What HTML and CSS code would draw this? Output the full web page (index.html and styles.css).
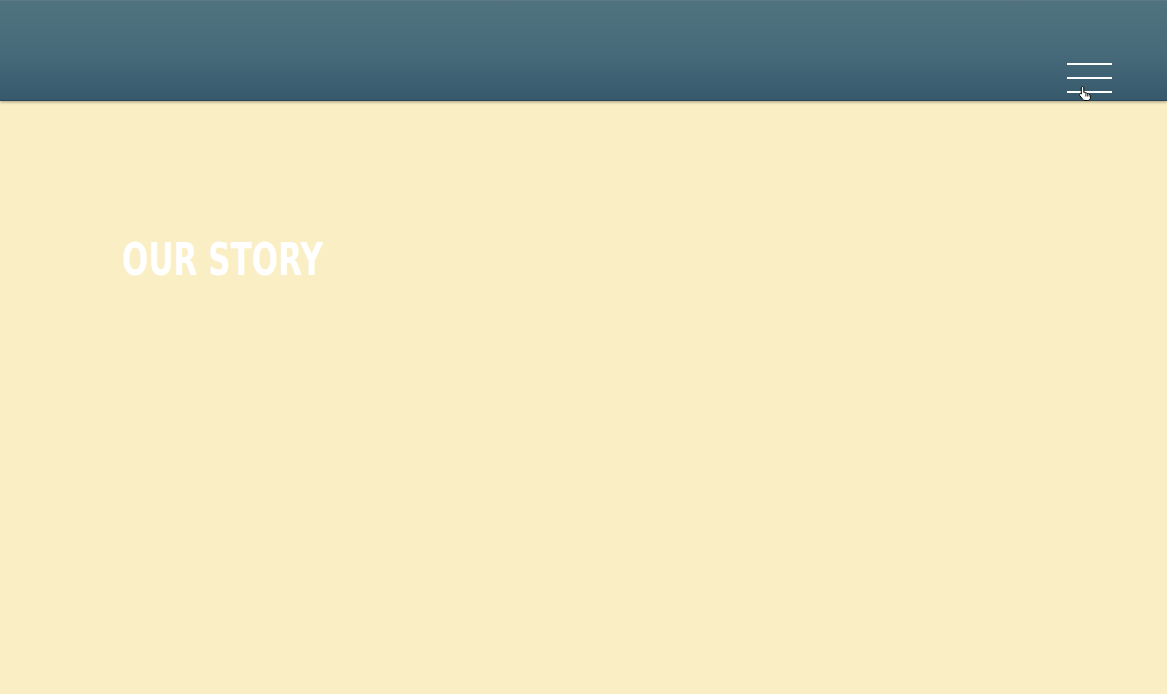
FILE: index.html
```html
<!DOCTYPE html>
<html>
<head>
<meta charset="utf-8">
<link rel="stylesheet" href="styles.css">
</head>
<body>
<header class="topbar">
  <button class="menu" aria-label="Menu">
    <span class="bar"></span>
    <span class="bar"></span>
    <span class="bar"></span>
    <svg class="cursor" width="14" height="17" viewBox="0 0 14 17">
      <path d="M4.5 1.5 C5.3 1.5 5.8 2 5.8 2.8 V7.5 L6.3 7.3 C7 7.1 7.6 7.4 7.8 8 C8.5 7.7 9.2 8 9.4 8.6 C10.1 8.4 10.8 8.8 11 9.4 C11.7 9.3 12.4 9.8 12.4 10.6 V12.8 C12.4 14.3 11.3 15.5 9.8 15.5 H7 C6 15.5 5.2 15 4.6 14.2 L1.6 10.4 C1.2 9.9 1.3 9.1 1.8 8.8 C2.3 8.4 3 8.5 3.3 9 V2.8 C3.3 2 3.8 1.5 4.5 1.5 Z" fill="#fff" stroke="#000" stroke-width="1"/>
      <path d="M7.8 8.2 V11.5 M9.4 8.8 V11.5 M11 9.6 V11.5" stroke="#000" stroke-width="0.8" fill="none"/>
    </svg>
  </button>
</header>
<main class="content">
  <h1 class="title">OUR STORY</h1>
</main>
</body>
</html>
```
FILE: styles.css
```css
html, body {
  margin: 0;
  padding: 0;
  height: 100%;
}
body {
  background: #faeec5;
  font-family: "DejaVu Sans", "Liberation Sans", sans-serif;
  overflow: hidden;
}
.topbar {
  box-sizing: border-box;
  height: 101px;
  background: linear-gradient(to bottom, #50737f 0%, #476b7a 50%, #365a6c 100%);
  border-top: 1px solid #5b7a86;
  border-bottom: 1px solid #2a4555;
  box-shadow: 0 1px 3px rgba(0, 0, 0, 0.35);
  display: flex;
  justify-content: flex-end;
  align-items: flex-start;
  padding-right: 55px;
}
.menu {
  position: relative;
  background: none;
  border: 0;
  padding: 0;
  margin-top: 62px;
  width: 45px;
  display: flex;
  flex-direction: column;
  gap: 12px;
  cursor: pointer;
}
.bar {
  display: block;
  width: 45px;
  height: 2px;
  background: #ffffff;
}
.cursor {
  position: absolute;
  left: 11px;
  top: 22px;
}
.content {
  padding: 136px 0 0 122px;
}
.title {
  margin: 0;
  color: #ffffff;
  font-size: 45px;
  font-weight: bold;
  line-height: 1;
  display: inline-block;
  transform: scaleX(0.69);
  transform-origin: left top;
}
```
